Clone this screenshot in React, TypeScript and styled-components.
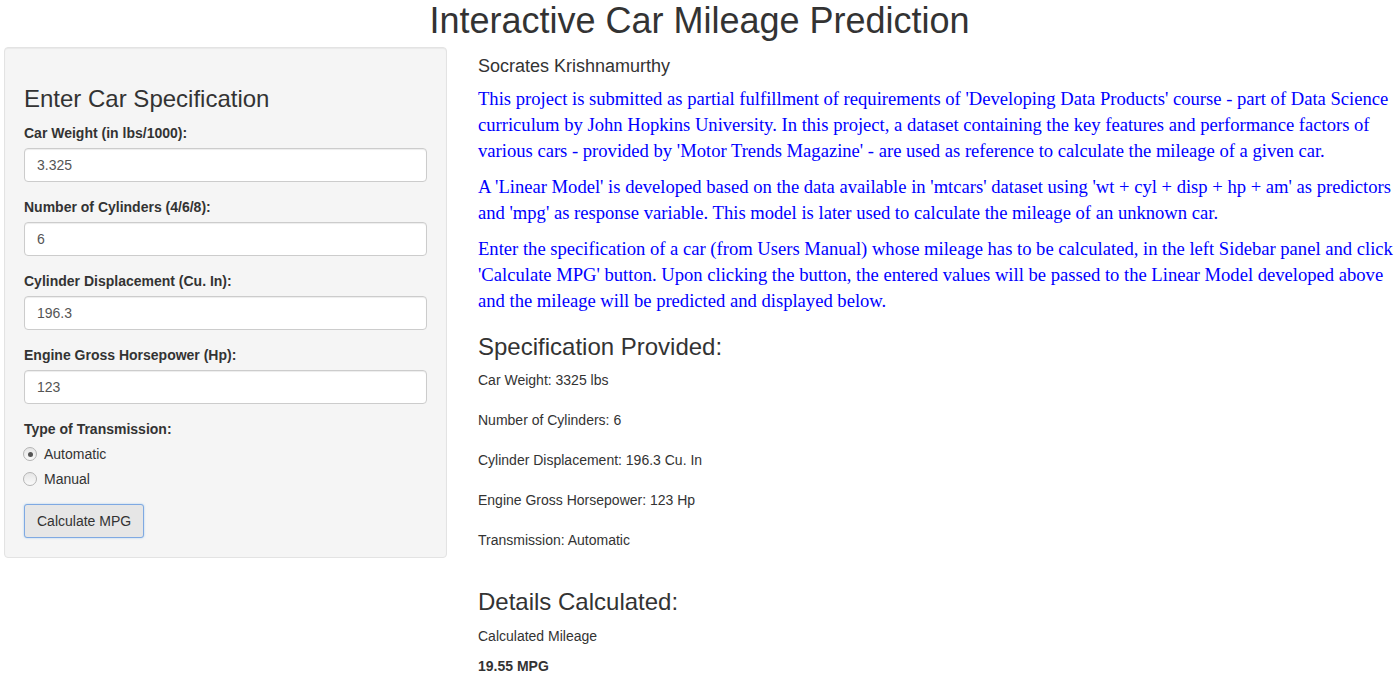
import { FC } from "react";

import styled, { createGlobalStyle } from "styled-components";

const specs = [
	"Car Weight: 3325 lbs",
	"Number of Cylinders: 6",
	"Cylinder Displacement: 196.3 Cu. In",
	"Engine Gross Horsepower: 123 Hp",
	"Transmission: Automatic",
];

const fields = [
	{ label: "Car Weight (in lbs/1000):", value: "3.325" },
	{ label: "Number of Cylinders (4/6/8):", value: "6" },
	{ label: "Cylinder Displacement (Cu. In):", value: "196.3" },
	{ label: "Engine Gross Horsepower (Hp):", value: "123" },
];

const App: FC = () => {
	return (
		<>
			<GlobalStyle />
			<Title>Interactive Car Mileage Prediction</Title>
			<PageRow>
				<Sidebar>
					<WellHeading>Enter Car Specification</WellHeading>
					{fields.map((f) => (
						<FormGroup key={f.label}>
							<FieldLabel>{f.label}</FieldLabel>
							<TextInput defaultValue={f.value} readOnly />
						</FormGroup>
					))}
					<FormGroup>
						<FieldLabel>Type of Transmission:</FieldLabel>
						<RadioList>
							<RadioRow>
								<RadioDot $checked />
								Automatic
							</RadioRow>
							<RadioRow>
								<RadioDot />
								Manual
							</RadioRow>
						</RadioList>
					</FormGroup>
					<ActionButton type="button">Calculate MPG</ActionButton>
				</Sidebar>
				<MainPanel>
					<Author>Socrates Krishnamurthy</Author>
					<Blurb>
						This project is submitted as partial fulfillment of requirements of 'Developing Data Products' course - part of Data
						Science curriculum by John Hopkins University. In this project, a dataset containing the key features and performance
						factors of various cars - provided by 'Motor Trends Magazine' - are used as reference to calculate the mileage of a given
						car.
					</Blurb>
					<Blurb>
						A 'Linear Model' is developed based on the data available in 'mtcars' dataset using 'wt + cyl + disp + hp + am' as
						predictors and 'mpg' as response variable. This model is later used to calculate the mileage of an unknown car.
					</Blurb>
					<Blurb>
						Enter the specification of a car (from Users Manual) whose mileage has to be calculated, in the left Sidebar panel and
						click 'Calculate MPG' button. Upon clicking the button, the entered values will be passed to the Linear Model developed
						above and the mileage will be predicted and displayed below.
					</Blurb>
					<SectionHeading>Specification Provided:</SectionHeading>
					<SpecList>
						{specs.map((s) => (
							<SpecLine key={s}>{s}</SpecLine>
						))}
					</SpecList>
					<SectionHeading>Details Calculated:</SectionHeading>
					<ResultLabel>Calculated Mileage</ResultLabel>
					<ResultValue>19.55 MPG</ResultValue>
				</MainPanel>
			</PageRow>
		</>
	);
};

export default App;

const GlobalStyle = createGlobalStyle`
	body {
		margin: 0;
		background: #fff;
		color: #333;
		font-family: "Liberation Sans", Arial, sans-serif;
		font-size: 14px;
		line-height: 20px;
	}
`;

const Title = styled.h1`
	margin: 0 0 5px;
	text-align: center;
	font-size: 36px;
	font-weight: 400;
	line-height: 42px;
	color: #333;
`;

const PageRow = styled.div`
	display: grid;
	grid-template-columns: 443px 1fr;
	column-gap: 31px;
	padding-left: 4px;
	align-items: start;
`;

const Sidebar = styled.form`
	background: #f5f5f5;
	border: 1px solid #e3e3e3;
	border-radius: 4px;
	padding: 19px;
	box-shadow: inset 0 1px 1px rgba(0, 0, 0, 0.05);
`;

const WellHeading = styled.h3`
	margin: 0 0 11px;
	padding-top: 19px;
	font-size: 24px;
	font-weight: 400;
	line-height: 26.4px;
`;

const FormGroup = styled.div`
	margin-bottom: 15px;
`;

const FieldLabel = styled.label`
	display: block;
	margin-bottom: 5px;
	font-weight: 700;
`;

const TextInput = styled.input`
	display: block;
	box-sizing: border-box;
	width: 100%;
	height: 34px;
	padding: 6px 12px;
	border: 1px solid #ccc;
	border-radius: 4px;
	background: #fff;
	color: #555;
	font-family: inherit;
	font-size: 14px;
	box-shadow: inset 0 1px 1px rgba(0, 0, 0, 0.075);
	outline: none;
`;

const RadioList = styled.div`
	display: flex;
	flex-direction: column;
	gap: 5px;
`;

const RadioRow = styled.div`
	display: flex;
	align-items: center;
	gap: 7px;
	height: 20px;
	margin-left: -1px;
`;

const RadioDot = styled.span<{ $checked?: boolean }>`
	position: relative;
	box-sizing: border-box;
	width: 14px;
	height: 14px;
	border-radius: 50%;
	border: 1px solid #b4b4b4;
	background: linear-gradient(#e6e6e6, #fafafa);

	&::after {
		content: "";
		display: ${(p) => (p.$checked ? "block" : "none")};
		position: absolute;
		left: 3.5px;
		top: 3.5px;
		width: 5px;
		height: 5px;
		border-radius: 50%;
		background: #555;
	}
`;

const ActionButton = styled.button`
	display: block;
	height: 34px;
	padding: 6px 12px;
	border: 1px solid #7fa9e2;
	border-radius: 3px;
	background: #e6e6e6;
	color: #333;
	font-family: inherit;
	font-size: 14px;
	line-height: 20px;
	box-shadow: 0 0 2px rgba(102, 175, 233, 0.6);
`;

const MainPanel = styled.div`
	padding-top: 1px;
`;

const Author = styled.h4`
	margin: 9px 0 9px;
	font-size: 18px;
	font-weight: 400;
	line-height: 19.8px;
`;

const Blurb = styled.p`
	margin: 0 0 10px;
	color: #0000ff;
	font-family: "Liberation Serif", "Times New Roman", serif;
	font-size: 18.6px;
	line-height: 26px;
`;

const SectionHeading = styled.h3`
	margin: 20px 0 10px;
	font-size: 24px;
	font-weight: 400;
	line-height: 26.4px;
`;

const SpecList = styled.div`
	display: flex;
	flex-direction: column;
	gap: 20px;
	padding-bottom: 19px;
`;

const SpecLine = styled.div`
	line-height: 20px;
`;

const ResultLabel = styled.div`
	margin-bottom: 10px;
`;

const ResultValue = styled.div`
	font-weight: 700;
`;
